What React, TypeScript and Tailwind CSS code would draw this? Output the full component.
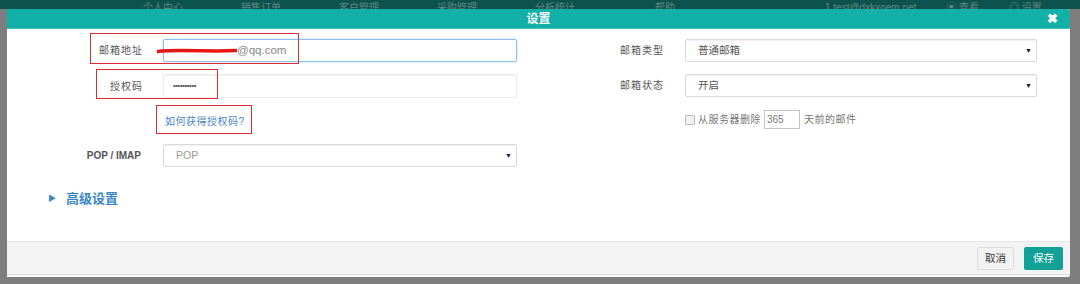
import React from 'react';

const FONT = { fontFamily: '"Liberation Sans", "Noto Sans CJK SC", sans-serif' };

const NAV = [
  { label: '个人中心', ml: 'ml-[143px]' },
  { label: '销售订单', ml: 'ml-[58px]' },
  { label: '客户管理', ml: 'ml-[58px]' },
  { label: '采购管理', ml: 'ml-[58px]' },
  { label: '分析统计', ml: 'ml-[58px]' },
  { label: '帮助', ml: 'ml-[80px]' },
];

function SelectBox({ value, muted }: { value: string; muted?: boolean }) {
  return (
    <div className="flex h-[23px] w-full items-center justify-between rounded-[2px] border border-[#d9d9d9] bg-white pl-[12px] pr-[4px] shadow-[inset_0_1px_1px_rgba(0,0,0,0.06)]">
      <span className={`text-[10.5px] ${muted ? 'text-[#999]' : 'text-[#555]'}`}>{value}</span>
      <span className="text-[7px] leading-none text-[#222]">▼</span>
    </div>
  );
}

export default function App() {
  return (
    <div className="relative h-[284px] w-[1080px] overflow-hidden bg-[#7e7e7e]" style={FONT}>
      {/* dimmed top nav behind the dialog */}
      <div className="flex h-[9px] items-end overflow-hidden bg-[#0e524d] text-[10px] leading-[12px] text-[#5d8a86]">
        <div className="mb-[-5px] flex">
          {NAV.map((n) => (
            <span key={n.label} className={n.ml}>
              {n.label}
            </span>
          ))}
          <span className="ml-[150px]">1 test@dxkxoem.net</span>
          <span className="ml-[30px]">▣ 查看</span>
          <span className="ml-[30px]">◎ 设置</span>
        </div>
      </div>

      {/* dialog */}
      <div className="ml-[7px] flex h-[268px] w-[1063px] flex-col overflow-hidden rounded-tr-[3px] rounded-br-[3px] bg-white">
        <div className="relative flex h-[20px] items-center justify-center border-b border-[#3cc6bc] bg-[#12b0a6]">
          <span className="text-[12px] font-bold text-white">设置</span>
          <span className="absolute right-[12px] top-[2px] text-[13px] font-bold leading-[16px] text-white">✖</span>
        </div>

        <div className="relative flex flex-1 flex-col">
          <div className="flex pt-[10px]">
            {/* left column */}
            <div className="flex w-[533px] flex-col">
              <div className="flex h-[23px] items-center">
                <span className="w-[136px] text-right text-[10px] tracking-[1px] text-[#555]">邮箱地址</span>
                <div className="ml-[20px] flex h-[23px] w-[354px] items-center rounded-[2px] border border-[#8fbfe8] bg-white pl-[13px] shadow-[0_0_3px_rgba(102,175,233,0.45)]">
                  <svg width="80" height="8" viewBox="0 0 80 8" className="-ml-[20px]">
                    <path d="M1 4.5 C12 3, 30 3.5, 45 3.8 S 70 4, 79 3.5" stroke="#e81616" strokeWidth="3.5" fill="none" strokeLinecap="round" />
                  </svg>
                  <span className="text-[11.5px] text-[#888]">@qq.com</span>
                </div>
              </div>
              <div className="mt-[12px] flex h-[24px] items-center">
                <span className="w-[136px] text-right text-[10px] tracking-[1px] text-[#555]">授权码</span>
                <div className="ml-[20px] flex h-[24px] w-[354px] items-center rounded-[2px] border border-[#ececec] bg-white pl-[9px] shadow-[inset_0_1px_1px_rgba(0,0,0,0.05)]">
                  <span className="text-[8px] tracking-[-0.5px] text-[#555]">••••••••••</span>
                </div>
              </div>
              <div className="mt-[15px] flex h-[16px] items-center">
                <span className="ml-[158px] text-[10px] tracking-[0.5px] text-[#4a86c4]">如何获得授权码?</span>
              </div>
              <div className="mt-[15px] flex h-[23px] items-center">
                <span className="w-[134px] text-right text-[10px] font-bold text-[#555]">POP / IMAP</span>
                <div className="ml-[22px] w-[354px]">
                  <SelectBox value="POP" muted />
                </div>
              </div>
            </div>

            {/* right column */}
            <div className="flex w-[530px] flex-col">
              <div className="flex h-[23px] items-center">
                <span className="w-[124px] text-right text-[10px] tracking-[1px] text-[#555]">邮箱类型</span>
                <div className="ml-[21px] w-[352px]">
                  <SelectBox value="普通邮箱" />
                </div>
              </div>
              <div className="mt-[12px] flex h-[23px] items-center">
                <span className="w-[124px] text-right text-[10px] tracking-[1px] text-[#555]">邮箱状态</span>
                <div className="ml-[21px] w-[352px]">
                  <SelectBox value="开启" />
                </div>
              </div>
              <div className="mt-[13px] flex h-[19px] items-center text-[10px] text-[#777]">
                <span className="ml-[145px] h-[10px] w-[10px] rounded-[1px] border border-[#bdbdbd] bg-[#f1f1f1]" />
                <span className="ml-[3px] tracking-[0.5px]">从服务器删除</span>
                <div className="ml-[3px] flex h-[19px] w-[36px] items-center border border-[#c4c4c4] bg-white pl-[2px] text-[#777]">365</div>
                <span className="ml-[4px] tracking-[0.5px]">天前的邮件</span>
              </div>
            </div>
          </div>

          <div className="mt-[22px] flex items-center pl-[41px] text-[#3a86c4]">
            <span className="text-[8px]">▶</span>
            <span className="ml-[10px] text-[13px] font-bold">高级设置</span>
          </div>

          {/* red annotation boxes */}
          <div className="absolute left-[83px] top-[4px] h-[31px] w-[209px] border-[1.5px] border-[#dc2b35]" />
          <div className="absolute left-[89px] top-[40px] h-[30px] w-[122px] border-[1.5px] border-[#dc2b35]" />
          <div className="absolute left-[149px] top-[76px] h-[29px] w-[96px] border-[1.5px] border-[#dc2b35]" />
        </div>

        <div className="flex h-[33px] items-center justify-end gap-[10px] border-t border-[#e6e6e6] bg-[#f3f3f3] pr-[7px] pt-[1px]">
          <div className="flex h-[23px] w-[37px] items-center justify-center rounded-[2px] border border-[#dcdcdc] bg-[#f2f2f2] text-[10.5px] text-[#333]">取消</div>
          <div className="flex h-[23px] w-[39px] items-center justify-center rounded-[2px] bg-[#12a196] text-[10.5px] text-white">保存</div>
        </div>
        <div className="h-[3px] border-t border-[#dcdcdc] bg-[#fafafa]" />
      </div>
    </div>
  );
}
